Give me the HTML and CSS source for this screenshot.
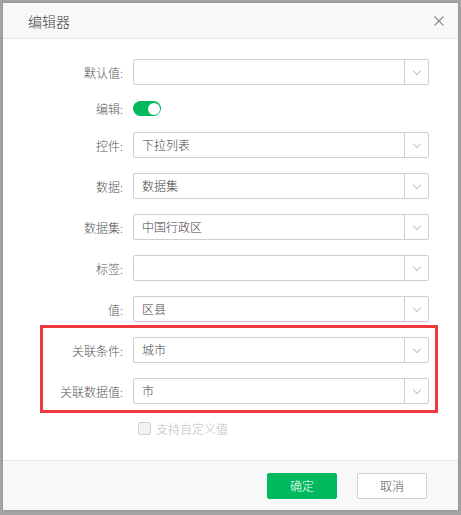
FILE: index.html
```html
<!DOCTYPE html>
<html lang="zh-CN">
  <head>
    <meta charset="UTF-8" />
    <meta name="viewport" content="width=device-width, initial-scale=1.0" />
    <title>编辑器</title>
    <link rel="stylesheet" href="styles.css">
  </head>
  <body>
    <div class="dialog">
      <div class="dialog-head">
        <span class="dialog-title">编辑器</span>
        <a href="javascript:;" class="dialog-close">
          <svg width="10" height="10" viewBox="0 0 10 10">
            <path d="M0.5 0.5L9.5 9.5M9.5 0.5L0.5 9.5" stroke="#8a8a8a" stroke-width="1.1" fill="none" />
          </svg>
        </a>
      </div>

      <div class="dialog-body">
        <div class="row">
          <label class="row-label">默认值:</label>
          <div class="select">
            <span class="select-value"></span>
            <span class="select-arrow"><i class="chevron"></i></span>
          </div>
        </div>

        <div class="row row-small">
          <label class="row-label">编辑:</label>
          <div><span class="switch on"><i class="switch-knob"></i></span></div>
        </div>

        <div class="row">
          <label class="row-label">控件:</label>
          <div class="select">
            <span class="select-value">下拉列表</span>
            <span class="select-arrow"><i class="chevron"></i></span>
          </div>
        </div>

        <div class="row">
          <label class="row-label">数据:</label>
          <div class="select">
            <span class="select-value">数据集</span>
            <span class="select-arrow"><i class="chevron"></i></span>
          </div>
        </div>

        <div class="row">
          <label class="row-label">数据集:</label>
          <div class="select">
            <span class="select-value">中国行政区</span>
            <span class="select-arrow"><i class="chevron"></i></span>
          </div>
        </div>

        <div class="row">
          <label class="row-label">标签:</label>
          <div class="select">
            <span class="select-value"></span>
            <span class="select-arrow"><i class="chevron"></i></span>
          </div>
        </div>

        <div class="row">
          <label class="row-label">值:</label>
          <div class="select">
            <span class="select-value">区县</span>
            <span class="select-arrow"><i class="chevron"></i></span>
          </div>
        </div>

        <!-- 标注框 -->
        <div class="group marked">
          <div class="row">
            <label class="row-label">关联条件:</label>
            <div class="select">
              <span class="select-value">城市</span>
              <span class="select-arrow"><i class="chevron"></i></span>
            </div>
          </div>
          <div class="row">
            <label class="row-label">关联数据值:</label>
            <div class="select">
              <span class="select-value">市</span>
              <span class="select-arrow"><i class="chevron"></i></span>
            </div>
          </div>
        </div>

        <div class="row row-check">
          <span></span>
          <label class="check disabled">
            <i class="check-box"></i>
            <span>支持自定义值</span>
          </label>
        </div>
      </div>

      <div class="dialog-foot">
        <a href="javascript:;" class="btn btn-primary">确定</a>
        <a href="javascript:;" class="btn">取消</a>
      </div>
    </div>
  </body>
</html>
```

FILE: styles.css
```css
html,
body {
  margin: 0;
  padding: 0;
}
body {
  padding: 3px;
  height: 515px;
  box-sizing: border-box;
  background: #a4a4a4;
  font: 300 12px 'Noto Sans CJK SC', 'Microsoft YaHei', sans-serif;
  color: #555;
}
a {
  text-decoration: none;
}
.dialog {
  display: flex;
  flex-direction: column;
  width: 455px;
  height: 507px;
  background: #fff;
  box-shadow: 0 0 2px rgba(0, 0, 0, 0.2);
}
.dialog-head {
  display: flex;
  align-items: center;
  justify-content: space-between;
  height: 35px;
  padding: 0 14px 0 25px;
  background: #f8f8f8;
  border-bottom: 1px solid #e6e6e6;
}
.dialog-title {
  font-size: 14px;
  color: #444;
}
.dialog-close {
  display: flex;
  margin-top: 1px;
}
.dialog-body {
  flex: 1;
  display: flex;
  flex-direction: column;
  gap: 15px;
  padding-top: 20px;
}
.row {
  display: grid;
  grid-template-columns: 120px 296px;
  column-gap: 10px;
  align-items: center;
}
.row-label {
  text-align: right;
  color: #555;
  white-space: nowrap;
}
.row-small {
  height: 17px;
}
.select {
  display: flex;
  height: 26px;
  box-sizing: border-box;
  border: 1px solid #cfcfcf;
  border-radius: 2px;
}
.select-value {
  flex: 1;
  padding: 0 8px;
  line-height: 24px;
  color: #444;
}
.select-arrow {
  display: flex;
  align-items: center;
  justify-content: center;
  width: 23px;
  border-left: 1px solid #cfcfcf;
}
.chevron {
  width: 5px;
  height: 5px;
  margin-top: -3px;
  border-right: 1px solid #c4c4c4;
  border-bottom: 1px solid #c4c4c4;
  transform: rotate(45deg);
}
.switch {
  position: relative;
  display: block;
  width: 28px;
  height: 15px;
  border-radius: 8px;
  background: #ccc;
}
.switch.on {
  background: #00b95f;
}
.switch-knob {
  position: absolute;
  top: 1.5px;
  left: 1.5px;
  width: 12px;
  height: 12px;
  border-radius: 50%;
  background: #fff;
}
.switch.on .switch-knob {
  left: 14.5px;
}
.group {
  display: flex;
  flex-direction: column;
  gap: 15px;
}
.marked {
  position: relative;
}
.marked::after {
  content: '';
  position: absolute;
  top: -12px;
  left: 37px;
  right: 20px;
  bottom: -9px;
  border: 3px solid #ef3a3d;
  pointer-events: none;
}
.row-check {
  height: 18px;
}
.check {
  display: flex;
  align-items: center;
  gap: 5px;
  padding-left: 5px;
}
.check-box {
  width: 11px;
  height: 11px;
  border: 1px solid #d2d2d2;
  border-radius: 2px;
  background: #f2f2f2;
}
.check.disabled {
  color: #bcbcbc;
}
.dialog-foot {
  display: flex;
  justify-content: flex-end;
  align-items: center;
  gap: 20px;
  height: 49px;
  padding-right: 31px;
  background: #f8f8f8;
  border-top: 1px solid #e6e6e6;
}
.btn {
  display: block;
  width: 70px;
  height: 26px;
  box-sizing: border-box;
  line-height: 24px;
  text-align: center;
  border: 1px solid #cfcfcf;
  border-radius: 2px;
  background: #fff;
  color: #555;
}
.btn-primary {
  border-color: #00b95f;
  background: #00b95f;
  color: #fff;
}
```
